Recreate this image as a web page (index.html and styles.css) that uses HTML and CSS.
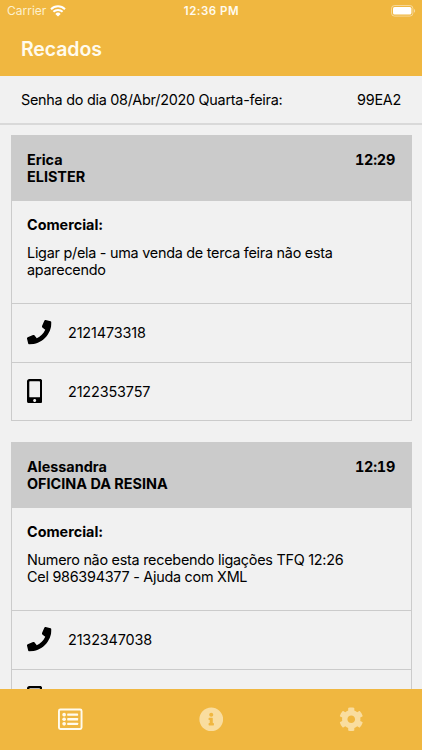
FILE: index.html
```
<!DOCTYPE html>
<html lang="pt-BR">
<head>
    <meta charset="UTF-8">
    <meta name="viewport" content="width=device-width, initial-scale=1.0">
    <title>Recados</title>
    <link rel="stylesheet" href="styles.css">
</head>
<body>
    <!-- Icons shared by the cards -->
    <svg class="icon-defs">
        <symbol id="icon-phone" viewBox="0 0 512 512">
            <path d="M493.4 24.6l-104-24c-11.3-2.6-22.9 3.3-27.5 13.9l-48 112c-4.2 9.8-1.4 21.3 6.9 28l60.6 49.6c-36 76.7-98.9 140.5-177.2 177.2l-49.6-60.6c-6.8-8.3-18.2-11.1-28-6.9l-112 48C3.9 366.5-2 378.1.6 389.4l24 104C27.1 504.2 36.7 512 48 512c256.1 0 464-207.5 464-464 0-11.2-7.7-20.9-18.6-23.4z"/>
        </symbol>
        <symbol id="icon-mobile" viewBox="0 0 320 512">
            <path d="M272 0H48C21.5 0 0 21.5 0 48v416c0 26.5 21.5 48 48 48h224c26.5 0 48-21.5 48-48V48c0-26.5-21.5-48-48-48zM160 480c-17.7 0-32-14.3-32-32s14.3-32 32-32 32 14.3 32 32-14.3 32-32 32zm112-108c0 6.6-5.4 12-12 12H60c-6.6 0-12-5.4-12-12V60c0-6.6 5.4-12 12-12h200c6.6 0 12 5.4 12 12v312z"/>
        </symbol>
    </svg>

    <div class="app">
        <header class="header">
            <div class="status-bar">
                <div class="carrier">
                    <span>Carrier</span>
                    <svg class="wifi" viewBox="0 0 16 12">
                        <path d="M1 4.2a10 10 0 0 1 14 0M3.4 6.8a6.6 6.6 0 0 1 9.2 0" fill="none" stroke="currentColor" stroke-width="2"/>
                        <path d="M8 11.6L5.3 8.9a3.8 3.8 0 0 1 5.4 0z" fill="currentColor"/>
                    </svg>
                </div>
                <div class="clock">12:36 PM</div>
                <div class="battery-wrap">
                    <svg class="battery" viewBox="0 0 25 12">
                        <rect x="0.5" y="0.5" width="21.4" height="10.6" rx="3" fill="none" stroke="#fff" stroke-opacity="0.45"/>
                        <rect x="2" y="2" width="18.4" height="7.6" rx="1.6" fill="#fff"/>
                        <path d="M23 4v3.8c1.5-.6 1.5-3.2 0-3.8z" fill="#fff" fill-opacity="0.5"/>
                    </svg>
                </div>
            </div>
            <h1>Recados</h1>
        </header>

        <div class="password">
            <span>Senha do dia 08/Abr/2020 Quarta-feira:</span>
            <span>99EA2</span>
        </div>

        <main class="messages">
            <div class="card">
                <div class="card-header">
                    <div>Erica<br>ELISTER</div>
                    <div class="time">12:29</div>
                </div>
                <div class="card-body">
                    <h2>Comercial:</h2>
                    <p>Ligar p/ela - uma venda de terca feira não esta<br>aparecendo</p>
                </div>
                <div class="contact">
                    <svg class="contact-icon phone"><use href="#icon-phone"/></svg>
                    <span>2121473318</span>
                </div>
                <div class="contact">
                    <svg class="contact-icon mobile"><use href="#icon-mobile"/></svg>
                    <span>2122353757</span>
                </div>
            </div>

            <div class="card">
                <div class="card-header">
                    <div>Alessandra<br>OFICINA DA RESINA</div>
                    <div class="time">12:19</div>
                </div>
                <div class="card-body">
                    <h2>Comercial:</h2>
                    <p>Numero não esta recebendo ligações TFQ 12:26<br>Cel 986394377 - Ajuda com XML</p>
                </div>
                <div class="contact">
                    <svg class="contact-icon phone"><use href="#icon-phone"/></svg>
                    <span>2132347038</span>
                </div>
                <div class="contact">
                    <svg class="contact-icon mobile"><use href="#icon-mobile"/></svg>
                </div>
            </div>
        </main>

        <nav class="tabs">
            <a class="tab active">
                <svg viewBox="0 0 512 512">
                    <rect x="20" y="52" width="472" height="408" rx="30" fill="none" stroke="currentColor" stroke-width="40"/>
                    <g fill="currentColor">
                        <circle cx="128" cy="160" r="38"/>
                        <circle cx="128" cy="256" r="38"/>
                        <circle cx="128" cy="352" r="38"/>
                        <rect x="192" y="136" width="228" height="48" rx="10"/>
                        <rect x="192" y="232" width="228" height="48" rx="10"/>
                        <rect x="192" y="328" width="228" height="48" rx="10"/>
                    </g>
                </svg>
            </a>
            <a class="tab">
                <svg viewBox="0 0 512 512">
                    <path fill="currentColor" d="M256 8C119.043 8 8 119.083 8 256c0 136.997 111.043 248 248 248s248-111.003 248-248C504 119.083 392.957 8 256 8zm0 110c23.196 0 42 18.804 42 42s-18.804 42-42 42-42-18.804-42-42 18.804-42 42-42zm56 254c0 6.627-5.373 12-12 12h-88c-6.627 0-12-5.373-12-12v-24c0-6.627 5.373-12 12-12h12v-64h-12c-6.627 0-12-5.373-12-12v-24c0-6.627 5.373-12 12-12h64c6.627 0 12 5.373 12 12v100h12c6.627 0 12 5.373 12 12v24z"/>
                </svg>
            </a>
            <a class="tab">
                <svg viewBox="0 0 512 512">
                    <path fill="currentColor" d="M487.4 315.7l-42.6-24.6c4.3-23.2 4.3-47 0-70.2l42.6-24.6c4.9-2.8 7.1-8.6 5.5-14-11.1-35.6-30-67.8-54.7-94.6-3.8-4.1-10-5.1-14.8-2.3L380.8 110c-17.9-15.4-38.5-27.3-60.8-35.1V25.8c0-5.6-3.9-10.5-9.4-11.7-36.7-8.2-74.3-7.8-109.2 0-5.5 1.2-9.4 6.1-9.4 11.7V75c-22.2 7.9-42.8 19.8-60.8 35.1L88.7 85.5c-4.9-2.8-11-1.9-14.8 2.3-24.7 26.7-43.6 58.9-54.7 94.6-1.7 5.4.6 11.2 5.5 14L67.3 221c-4.3 23.2-4.3 47 0 70.2l-42.6 24.6c-4.9 2.8-7.1 8.6-5.5 14 11.1 35.6 30 67.8 54.7 94.6 3.8 4.1 10 5.1 14.8 2.3l42.6-24.6c17.9 15.4 38.5 27.3 60.8 35.1v49.2c0 5.6 3.9 10.5 9.4 11.7 36.7 8.2 74.3 7.8 109.2 0 5.5-1.2 9.4-6.1 9.4-11.7v-49.2c22.2-7.9 42.8-19.8 60.8-35.1l42.6 24.6c4.9 2.8 11 1.9 14.8-2.3 24.7-26.7 43.6-58.9 54.7-94.6 1.5-5.5-.7-11.3-5.6-14.1zM256 336c-44.1 0-80-35.9-80-80s35.9-80 80-80 80 35.9 80 80-35.9 80-80 80z"/>
                </svg>
            </a>
        </nav>
    </div>
</body>
</html>
```

FILE: styles.css
```
* {
    margin: 0;
    padding: 0;
    box-sizing: border-box;
}

body {
    font-family: Inter, 'Helvetica Neue', Arial, sans-serif;
    font-size: 14.4px;
    line-height: 17.4px;
    color: #000;
    background: #f1f1f1;
}

.icon-defs {
    display: none;
}

.app {
    display: flex;
    flex-direction: column;
    height: 100vh;
    overflow: hidden;
}

/* Header */
.header {
    height: 76px;
    flex-shrink: 0;
    background: #f0b740;
    color: #fffbee;
}

.status-bar {
    display: grid;
    grid-template-columns: 1fr auto 1fr;
    align-items: center;
    height: 22px;
    padding: 0 6px 0 7px;
    font-size: 12px;
}

.carrier {
    display: flex;
    align-items: center;
    gap: 4px;
    color: #fdf0cd;
}

.wifi {
    width: 16px;
    height: 12px;
    color: #fff;
}

.clock {
    padding-top: 1px;
    font-size: 11.5px;
    font-weight: 600;
    letter-spacing: 0.5px;
}

.battery-wrap {
    display: flex;
    justify-content: flex-end;
}

.battery {
    width: 25px;
    height: 12px;
}

.header h1 {
    padding: 14px 21px 0;
    font-size: 19.5px;
    font-weight: 600;
    letter-spacing: -0.1px;
    line-height: 26px;
}

/* Password of the day */
.password {
    display: flex;
    justify-content: space-between;
    align-items: center;
    flex-shrink: 0;
    height: 49px;
    padding: 0 21px;
    border-bottom: 2px solid #d9d9d9;
    letter-spacing: -0.26px;
}

/* Messages */
.messages {
    flex: 1;
    min-height: 0;
    overflow: hidden;
    padding: 10px 10.5px 0;
}

.card {
    height: 286px;
    margin-bottom: 21px;
    border: 1px solid #cbcbcb;
}

.card-header {
    display: flex;
    justify-content: space-between;
    height: 65px;
    padding: 14.8px 15.5px 0;
    background: #cbcbcb;
    font-weight: 700;
}

.time {
    font-variant-numeric: tabular-nums;
    letter-spacing: -0.2px;
}

.card-body {
    height: 102px;
    padding: 14.8px 15.5px 0;
}

.card-body h2 {
    margin-bottom: 10.6px;
    font-size: 14.4px;
    font-weight: 700;
}

.card-body p {
    letter-spacing: -0.26px;
}

.contact {
    display: flex;
    align-items: center;
    height: 58.5px;
    padding: 0 15.5px 1px;
    border-top: 1px solid #cbcbcb;
    letter-spacing: -0.13px;
}

.contact span {
    padding-top: 1px;
}

.contact-icon {
    height: 24.5px;
}

.contact-icon.phone {
    width: 24.5px;
    margin-right: 16.5px;
}

.contact-icon.mobile {
    width: 15.3px;
    margin-right: 25.7px;
}

/* Bottom tabs */
.tabs {
    display: flex;
    flex-shrink: 0;
    height: 61px;
    background: #f0b740;
}

.tab {
    display: flex;
    flex: 1;
    justify-content: center;
    align-items: center;
    color: #f9dd9f;
}

.tab.active {
    color: #fffbee;
}

.tab svg {
    width: 24.5px;
    height: 24.5px;
}
```
